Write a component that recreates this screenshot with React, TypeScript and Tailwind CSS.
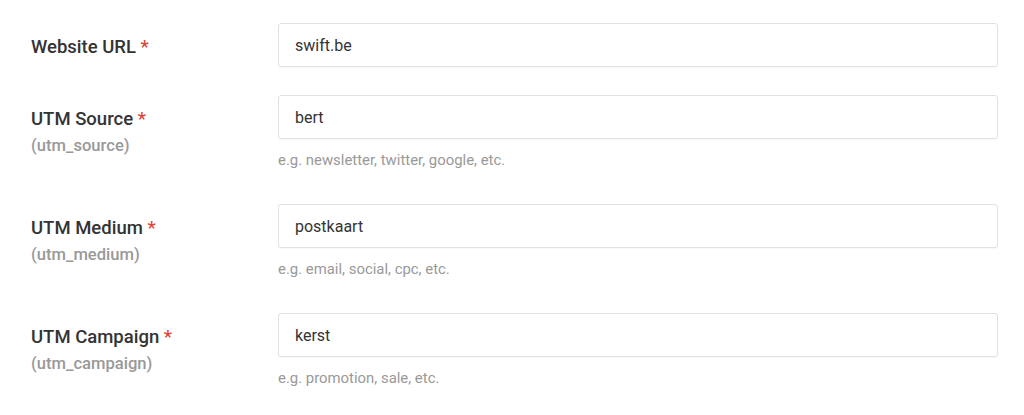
import { useState } from 'react';

interface Field {
  id: string;
  label: string;
  param?: string;
  value: string;
  hint?: string;
}

const fields: Field[] = [
  { id: 'url', label: 'Website URL', value: 'swift.be' },
  { id: 'source', label: 'UTM Source', param: '(utm_source)', value: 'bert', hint: 'e.g. newsletter, twitter, google, etc.' },
  { id: 'medium', label: 'UTM Medium', param: '(utm_medium)', value: 'postkaart', hint: 'e.g. email, social, cpc, etc.' },
  { id: 'campaign', label: 'UTM Campaign', param: '(utm_campaign)', value: 'kerst', hint: 'e.g. promotion, sale, etc.' },
];

export default function App() {
  const [values, setValues] = useState<Record<string, string>>(
    Object.fromEntries(fields.map(f => [f.id, f.value]))
  );

  return (
    <div className="w-full min-h-[415px] bg-white pt-[23px] pl-[31px] pr-[26px] font-['Roboto',sans-serif] antialiased">
      {fields.map(f => (
        <div key={f.id} className={`flex ${f.hint ? 'mb-[34px]' : 'mb-[28px]'}`}>
          <div className="w-[247px] shrink-0 pt-[11px]">
            <label htmlFor={f.id} className="block text-[18.5px] leading-[26px] font-medium text-[#333]">
              {f.label} <span className="text-[#de4436]">*</span>
            </label>
            {f.param && (
              <div className="text-[16.6px] leading-[27px] font-medium text-[#999]">{f.param}</div>
            )}
          </div>
          <div className="flex-1">
            <input
              id={f.id}
              type="text"
              value={values[f.id]}
              onChange={e => setValues(prev => ({ ...prev, [f.id]: e.target.value }))}
              className="w-full h-[44px] px-[16px] rounded-[3px] border border-[#e1e1e1] bg-white text-[16px] text-[#333] outline-none shadow-[0_1px_1px_rgba(0,0,0,0.03)]"
            />
            {f.hint && (
              <p className="mt-[11px] text-[14.9px] leading-[20px] text-[#999]">{f.hint}</p>
            )}
          </div>
        </div>
      ))}
    </div>
  );
}
